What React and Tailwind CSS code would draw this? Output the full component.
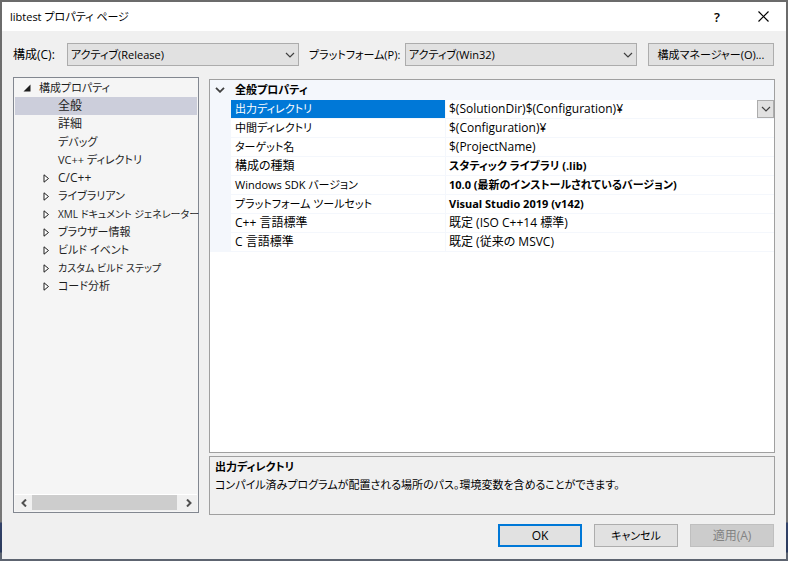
import { useState } from "react";

const TREE = [
  { label: "全般", size: "text-[12px]" },
  { label: "詳細", size: "text-[12px]" },
  { label: "デバッグ" },
  { label: "VC++ ディレクトリ" },
  { label: "C/C++", size: "text-[12px]", children: true },
  { label: "ライブラリアン", children: true },
  { label: "XML ドキュメント ジェネレーター", size: "text-[10px]", children: true },
  { label: "ブラウザー情報", children: true },
  { label: "ビルド イベント", children: true },
  { label: "カスタム ビルド ステップ", size: "text-[10px]", children: true },
  { label: "コード分析", children: true },
];

const ROWS = [
  { name: "中間ディレクトリ", value: "$(Configuration)¥" },
  { name: "ターゲット名", value: "$(ProjectName)" },
  { name: "構成の種類", size: "text-[12px]", value: "スタティック ライブラリ (.lib)", bold: true },
  { name: "Windows SDK バージョン", value: "10.0 (最新のインストールされているバージョン)", bold: true },
  { name: "プラットフォーム ツールセット", value: "Visual Studio 2019 (v142)", bold: true },
  { name: "C++ 言語標準", size: "text-[12px]", value: "既定 (ISO C++14 標準)" },
  { name: "C 言語標準", size: "text-[12px]", value: "既定 (従来の MSVC)" },
];

function Chevron({ className }) {
  return (
    <svg viewBox="0 0 10 6" className={className} fill="none" stroke="currentColor" aria-hidden="true">
      <path d="M1 1l4 4 4-4" strokeWidth="1.2" />
    </svg>
  );
}

function Dropdown({ id, value }) {
  return (
    <div className="relative min-w-0 flex-1">
      <select
        id={id}
        defaultValue={value}
        className="block h-[23px] w-full appearance-none border border-[#acacac] bg-[#e1e1e1] px-[3px] pr-5 leading-5 outline-none"
      >
        <option>{value}</option>
      </select>
      <Chevron className="pointer-events-none absolute top-[9px] right-1 h-[6px] w-[10px] text-[#404040]" />
    </div>
  );
}

function DialogButton({ children, className = "", ...rest }) {
  return (
    <button type="button" className={"h-[23px] w-[84px] " + className} {...rest}>
      {children}
    </button>
  );
}

function ScrollArrow({ d, label }) {
  return (
    <button type="button" aria-label={label} className="flex w-[17px] items-center justify-center">
      <svg viewBox="0 0 6 8" className="h-2 w-[6px]" fill="none" stroke="#505050" strokeWidth="2" aria-hidden="true">
        <path d={d} />
      </svg>
    </button>
  );
}

function Tree() {
  const [selected, setSelected] = useState("全般");
  return (
    <nav className="flex w-[186px] shrink-0 flex-col border border-[#828790] bg-[#f5f5f5] p-px text-[#1e1e1e]">
      <ul className="flex-1">
        <li>
          <button type="button" className="flex h-[18px] w-full items-center pl-2 text-left">
            <svg viewBox="0 0 8 8" className="mr-2 h-2 w-2" aria-hidden="true">
              <path d="M7.5 0.5v7h-7z" fill="#1e1e1e" />
            </svg>
            構成プロパティ
          </button>
          <ul>
            {TREE.map((item) => (
              <li key={item.label}>
                <button
                  type="button"
                  onClick={() => setSelected(item.label)}
                  className={
                    "flex h-[18px] w-full items-center pl-7 text-left whitespace-nowrap " +
                    (item.size ?? "") +
                    (selected === item.label ? " bg-[#cccedb]" : "")
                  }
                >
                  <span className="flex w-[15px] shrink-0">
                    {item.children && (
                      <svg viewBox="0 0 6 9" className="h-[9px] w-[6px]" aria-hidden="true">
                        <path d="M1 0.8v7.4l4.5-3.7z" fill="#fff" stroke="#1e1e1e" />
                      </svg>
                    )}
                  </span>
                  {item.label}
                </button>
              </li>
            ))}
          </ul>
        </li>
      </ul>
      <div className="flex h-[17px] border-t border-white bg-[#f0f0f0]">
        <ScrollArrow label="左へスクロール" d="M5 0.5L1.5 4L5 7.5" />
        <div className="flex-1">
          <div className="mr-[3px] h-[15px] bg-[#cdcdcd]" />
        </div>
        <ScrollArrow label="右へスクロール" d="M1 0.5L4.5 4L1 7.5" />
      </div>
    </nav>
  );
}

function PropertyGrid() {
  return (
    <div className="flex-1 border border-[#a0a0a0] bg-white">
      <table className="w-full table-fixed border-separate border-spacing-0 text-left">
        <colgroup>
          <col className="w-[21px]" />
          <col className="w-[215px]" />
          <col />
        </colgroup>
        <thead>
          <tr className="h-5 bg-[#f4f7fc]">
            <th className="p-0">
              <button type="button" aria-label="全般プロパティを折りたたむ" className="flex h-5 w-5 items-center justify-center">
                <svg viewBox="0 0 10 6" className="h-[6px] w-[10px]" fill="none" stroke="#404040" strokeWidth="1.8" aria-hidden="true">
                  <path d="M1 0.8l4 4 4-4" />
                </svg>
              </button>
            </th>
            <th colSpan={2} className="px-1 py-0 font-bold">
              全般プロパティ
            </th>
          </tr>
        </thead>
        <tbody>
          <tr className="h-[19px]">
            <td className="bg-[#f4f7fc] p-0" />
            <th className="border-r border-b border-[#f4f7fc] bg-[#0078d7] px-1 py-0 font-normal text-white">
              <label htmlFor="outdir" className="block">出力ディレクトリ</label>
            </th>
            <td className="border-b border-[#f4f7fc] p-0">
              <div className="flex h-[18px]">
                <input
                  id="outdir"
                  defaultValue="$(SolutionDir)$(Configuration)¥"
                  className="min-w-0 flex-1 px-[3px] text-[12px] outline-none"
                />
                <button
                  type="button"
                  aria-label="値の一覧を開く"
                  className="flex w-[17px] items-center justify-center border border-[#acacac] bg-[#e1e1e1]"
                >
                  <Chevron className="h-[6px] w-[10px] text-[#404040]" />
                </button>
              </div>
            </td>
          </tr>
          {ROWS.map((row) => (
            <tr key={row.name} className="h-[19px]">
              <td className="bg-[#f4f7fc] p-0" />
              <th className={"border-r border-b border-[#f4f7fc] px-1 py-0 font-normal " + (row.size ?? "")}>{row.name}</th>
              <td className={"border-b border-[#f4f7fc] px-[3px] py-0 " + (row.bold ? "font-bold" : "text-[12px]")}>{row.value}</td>
            </tr>
          ))}
        </tbody>
      </table>
    </div>
  );
}

export default function App() {
  return (
    <div className="h-screen bg-[linear-gradient(#6b6b6b_0,#777777_522px,#33436a_523px,#2b3a5c_552px,#5d6470_553px)] p-[2px] font-['Open_Sans','Noto_Sans_CJK_JP',sans-serif] text-[11px] leading-[18px] text-black [font-feature-settings:'palt']">
      <main className="flex h-full flex-col bg-[#f0f0f0]">
        <header className="flex h-[29px] shrink-0 items-center bg-white pl-2">
          <h1 className="flex-1">libtest プロパティ ページ</h1>
          <button type="button" aria-label="ヘルプ" className="flex w-[46px] justify-center text-[13px] font-semibold">
            ?
          </button>
          <button type="button" aria-label="閉じる" className="flex h-full w-[46px] items-center justify-center">
            <svg viewBox="0 0 11 11" className="h-[11px] w-[11px]" stroke="#000" strokeWidth="1.2" aria-hidden="true">
              <path d="M0.5 0.5l10 10M10.5 0.5l-10 10" />
            </svg>
          </button>
        </header>
        <div className="flex shrink-0 items-center pt-3 pr-3 pl-[11px]">
          <label htmlFor="config" className="w-[54px] shrink-0 text-[12px]">
            構成(C):
          </label>
          <Dropdown id="config" value="アクティブ(Release)" />
          <label htmlFor="platform" className="ml-[10px] w-24 shrink-0 whitespace-nowrap">
            プラットフォーム(P):
          </label>
          <Dropdown id="platform" value="アクティブ(Win32)" />
          <button type="button" className="ml-[11px] h-[23px] w-[126px] shrink-0 border border-[#adadad] bg-[#e1e1e1]">
            構成マネージャー(O)...
          </button>
        </div>
        <div className="flex min-h-0 flex-1 gap-[10px] pt-[11px] pr-[11px] pl-[11px]">
          <Tree />
          <div className="flex min-w-0 flex-1 flex-col gap-[3px] pt-[2px]">
            <PropertyGrid />
            <section className="-mb-[2px] h-[59px] shrink-0 border border-[#a0a0a0] px-[5px] pt-px">
              <h2 className="font-bold">出力ディレクトリ</h2>
              <p>コンパイル済みプログラムが配置される場所のパス。環境変数を含めることができます。</p>
            </section>
          </div>
        </div>
        <footer className="flex shrink-0 justify-end gap-3 pt-[11px] pr-3 pb-3">
          <DialogButton className="border-2 border-[#0078d7] bg-[#e1e1e1] text-[12px]">OK</DialogButton>
          <DialogButton className="border border-[#adadad] bg-[#e1e1e1]">キャンセル</DialogButton>
          <DialogButton disabled className="border border-[#bfbfbf] bg-[#cccccc] text-[12px] text-[#838383]">
            適用(A)
          </DialogButton>
        </footer>
      </main>
    </div>
  );
}
